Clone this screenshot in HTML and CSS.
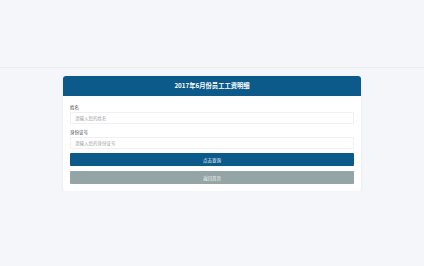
FILE: index.html
```html
<!DOCTYPE html>
<html lang="zh-CN">
<head>
    <meta charset="UTF-8">
    <meta name="viewport" content="width=device-width, initial-scale=1.0">
    <title>2017年6月份员工工资明细</title>
    <link rel="stylesheet" href="styles.css">
</head>
<body>
    <div class="topbar"></div>
    <div class="card">
        <div class="card-header">
            <h2 class="card-title">2017年6月份员工工资明细</h2>
        </div>
        <div class="card-content">
            <div class="form-group">
                <label class="form-label" for="name">姓名</label>
                <input class="form-input" id="name" type="text" placeholder="请输入您的姓名">
            </div>
            <div class="form-group">
                <label class="form-label" for="idcard">身份证号</label>
                <input class="form-input" id="idcard" type="text" placeholder="请输入您的身份证号">
            </div>
            <button class="btn btn-primary">点击查询</button>
            <button class="btn btn-grey">返回首页</button>
        </div>
    </div>
</body>
</html>
```

FILE: styles.css
```css
body {
    font-family: "Noto Sans CJK SC", "Noto Sans", sans-serif;
    background-color: #f5f6fa;
    color: #333;
    margin: 0;
}
.topbar {
    height: 67px;
    border-bottom: 1px solid #eceef2;
}
.card {
    width: 298px;
    margin: 8px auto 0;
    background-color: #fff;
    border-radius: 3px;
    box-shadow: 0 1px 3px rgba(0,0,0,0.07);
    overflow: hidden;
}
.card-header {
    background-color: #0b5a8a;
    height: 20px;
    display: flex;
    justify-content: center;
    align-items: center;
}
.card-title {
    margin: 0;
    color: #fff;
    font-size: 6.3px;
    font-weight: bold;
    line-height: 1;
}
.card-content {
    padding: 8px 7px 7px;
}
.form-group {
    margin-bottom: 5px;
}
.form-label {
    display: block;
    font-size: 4.5px;
    line-height: 6px;
    margin-bottom: 2px;
    color: #444;
}
.form-input {
    display: block;
    box-sizing: border-box;
    width: 100%;
    height: 12px;
    padding: 0 4px;
    border: 1px solid #eef0f3;
    border-radius: 1px;
    font-family: inherit;
    font-size: 4.5px;
    color: #333;
    outline: none;
}
.form-input::placeholder {
    color: #a0a0a0;
}
.btn {
    display: block;
    box-sizing: border-box;
    width: 100%;
    height: 13px;
    padding: 0;
    border: none;
    border-radius: 1px;
    font-family: inherit;
    font-size: 4.5px;
    color: #fff;
    cursor: pointer;
}
.btn-primary {
    background-color: #0b5a8a;
    margin-top: -1px;
    margin-bottom: 5px;
}
.btn-grey {
    background-color: #95a5a6;
    color: #eef2f2;
}
```
